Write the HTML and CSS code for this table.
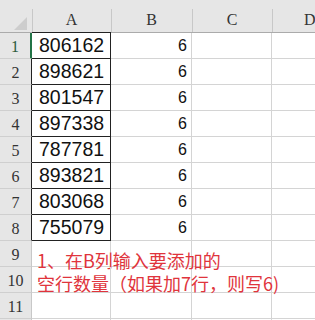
FILE: index.html
```html
<!DOCTYPE html>
<html>
<head>
<meta charset="utf-8">
<link rel="stylesheet" href="styles.css">
</head>
<body>
<div class="sheet">
  <div class="corner"><span class="tri"></span></div>
  <div class="colhead">A</div>
  <div class="colhead">B</div>
  <div class="colhead">C</div>
  <div class="colhead last">D</div>

  <div class="rowhead sel">1</div><div class="cell a">806162</div><div class="cell b">6</div><div class="cell"></div><div class="cell"></div>
  <div class="rowhead box">2</div><div class="cell a">898621</div><div class="cell b">6</div><div class="cell"></div><div class="cell"></div>
  <div class="rowhead box">3</div><div class="cell a">801547</div><div class="cell b">6</div><div class="cell"></div><div class="cell"></div>
  <div class="rowhead box">4</div><div class="cell a">897338</div><div class="cell b">6</div><div class="cell"></div><div class="cell"></div>
  <div class="rowhead box">5</div><div class="cell a">787781</div><div class="cell b">6</div><div class="cell"></div><div class="cell"></div>
  <div class="rowhead box">6</div><div class="cell a">893821</div><div class="cell b">6</div><div class="cell"></div><div class="cell"></div>
  <div class="rowhead box">7</div><div class="cell a">803068</div><div class="cell b">6</div><div class="cell"></div><div class="cell"></div>
  <div class="rowhead box">8</div><div class="cell a">755079</div><div class="cell b">6</div><div class="cell"></div><div class="cell"></div>
  <div class="rowhead">9</div><div class="cell note n1"><span class="note-text">1、在B列输入要添加的</span></div><div class="cell"></div><div class="cell"></div><div class="cell"></div>
  <div class="rowhead">10</div><div class="cell note n2"><span class="note-text">空行数量（如果加7行，则写6)</span></div><div class="cell"></div><div class="cell"></div><div class="cell"></div>
  <div class="rowhead">11</div><div class="cell"></div><div class="cell"></div><div class="cell"></div><div class="cell"></div>
  <div class="rowhead"></div><div class="cell"></div><div class="cell"></div><div class="cell"></div><div class="cell"></div>
</div>
</body>
</html>
```

FILE: styles.css
```css
html, body {
  margin: 0;
  padding: 0;
  background: #ffffff;
  overflow: hidden;
}

.sheet {
  display: grid;
  grid-template-columns: 32px 79px 81px 80px 60px;
  grid-template-rows: 33px repeat(12, 26px);
  width: 315px;
  height: 320px;
  overflow: hidden;
}

.sheet > div {
  box-sizing: border-box;
}

.corner {
  background: #e6e6e6;
  border-bottom: 1px solid #ababab;
  position: relative;
}

.tri {
  position: absolute;
  left: 14px;
  top: 17px;
  width: 0;
  height: 0;
  border-left: 13px solid transparent;
  border-bottom: 13px solid #cdcdcd;
}

.colhead {
  background: linear-gradient(#c8c8c8, #c8c8c8) left bottom / 1px 23px no-repeat, #e6e6e6;
  border-bottom: 1px solid #ababab;
  font-family: "Liberation Serif", serif;
  font-size: 16px;
  color: #333333;
  text-align: center;
  line-height: 18px;
  padding-top: 11px;
}

.colhead:nth-child(2) {
  border-bottom-color: #222222;
}

.colhead.last {
  text-align: left;
  padding-left: 32px;
}

.rowhead {
  background: #e6e6e6;
  border-right: 1px solid #c8c8c8;
  border-bottom: 1px solid #cfcfcf;
  font-family: "Liberation Serif", serif;
  font-size: 16px;
  color: #333333;
  text-align: center;
  line-height: 25px;
  padding-top: 1px;
}

.rowhead.box {
  border-right-color: #222222;
}

.rowhead.sel {
  border-right: 2px solid #217346;
  color: #2b5a3c;
}

.cell {
  border-right: 1px solid #d4d4d4;
  border-bottom: 1px solid #d4d4d4;
  font-family: "Liberation Sans", Arial, sans-serif;
  white-space: nowrap;
}

.cell.a {
  border-right-color: #222222;
  border-bottom-color: #222222;
  font-size: 19.5px;
  color: #111111;
  line-height: 25px;
  padding-left: 7px;
}

.cell.b {
  font-size: 16px;
  color: #111111;
  text-align: right;
  line-height: 26px;
  padding-right: 4px;
}

.cell.note {
  overflow: visible;
  position: relative;
  z-index: 1;
}

.cell.n1 {
  padding-top: 10px;
}

.cell.n2 {
  padding-top: 7px;
}

.note-text {
  display: block;
  font-family: "Noto Sans CJK SC", "Liberation Sans", sans-serif;
  font-size: 18px;
  line-height: 18px;
  color: #e0343c;
  padding-left: 5px;
}
```
